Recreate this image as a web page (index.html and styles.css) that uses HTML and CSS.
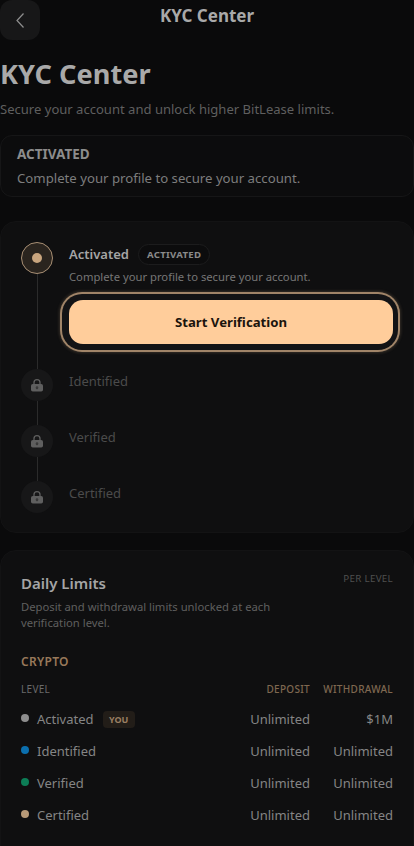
FILE: index.html
```html
<!DOCTYPE html>
<html lang="en">
<head>
<meta charset="utf-8">
<title>KYC Center</title>
<link rel="stylesheet" href="styles.css">
</head>
<body>
<header class="topbar">
  <button class="back" aria-label="Back">
    <svg width="12" height="18" viewBox="0 0 12 18" fill="none"><path d="M9.5 2.5 L3 9.5 L9.5 16.5" stroke="#8f8f8f" stroke-width="1.2"/></svg>
  </button>
  <div class="topbar-title">KYC Center</div>
</header>
<main>
  <h1 class="title">KYC Center</h1>
  <p class="subtitle">Secure your account and unlock higher BitLease limits.</p>
  <section class="status">
    <div class="status-name">ACTIVATED</div>
    <div class="status-text">Complete your profile to secure your account.</div>
  </section>
  <section class="card steps">
    <div class="step step-active">
      <div class="rail"><span class="node node-active"><span class="node-dot"></span></span><span class="line"></span></div>
      <div class="step-body">
        <div class="step-head"><span class="step-name">Activated</span><span class="pill">ACTIVATED</span></div>
        <div class="step-text">Complete your profile to secure your account.</div>
        <button class="cta">Start Verification</button>
      </div>
    </div>
    <div class="step">
      <div class="rail"><span class="node"><svg class="lock" width="14" height="14" viewBox="0 0 14 14"><path d="M4 6.5V4.6a3 3 0 0 1 6 0v1.9" fill="none" stroke="#5f5f5f" stroke-width="1.3"/><rect x="1" y="6" width="12" height="7.5" rx="1.8" fill="#5f5f5f"/><rect x="5.8" y="8.3" width="2.4" height="3" rx="1" fill="#3a3a3a"/></svg></span><span class="line"></span></div>
      <div class="step-locked">Identified</div>
    </div>
    <div class="step">
      <div class="rail"><span class="node"><svg class="lock" width="14" height="14" viewBox="0 0 14 14"><path d="M4 6.5V4.6a3 3 0 0 1 6 0v1.9" fill="none" stroke="#5f5f5f" stroke-width="1.3"/><rect x="1" y="6" width="12" height="7.5" rx="1.8" fill="#5f5f5f"/><rect x="5.8" y="8.3" width="2.4" height="3" rx="1" fill="#3a3a3a"/></svg></span><span class="line"></span></div>
      <div class="step-locked">Verified</div>
    </div>
    <div class="step step-last">
      <div class="rail"><span class="node"><svg class="lock" width="14" height="14" viewBox="0 0 14 14"><path d="M4 6.5V4.6a3 3 0 0 1 6 0v1.9" fill="none" stroke="#5f5f5f" stroke-width="1.3"/><rect x="1" y="6" width="12" height="7.5" rx="1.8" fill="#5f5f5f"/><rect x="5.8" y="8.3" width="2.4" height="3" rx="1" fill="#3a3a3a"/></svg></span></div>
      <div class="step-locked">Certified</div>
    </div>
  </section>
  <section class="card limits">
    <div class="limits-head">
      <div>
        <h2 class="limits-title">Daily Limits</h2>
        <p class="limits-text">Deposit and withdrawal limits unlocked at each verification level.</p>
      </div>
      <span class="per-level">PER LEVEL</span>
    </div>
    <div class="group">CRYPTO</div>
    <div class="row row-head">
      <span class="col-level">LEVEL</span><span class="col-dep accent">DEPOSIT</span><span class="col-wd accent">WITHDRAWAL</span>
    </div>
    <div class="row">
      <span class="col-level"><i class="dot dot-grey"></i>Activated<b class="you">YOU</b></span><span class="col-dep">Unlimited</span><span class="col-wd">$1M</span>
    </div>
    <div class="row">
      <span class="col-level"><i class="dot dot-blue"></i>Identified</span><span class="col-dep">Unlimited</span><span class="col-wd">Unlimited</span>
    </div>
    <div class="row">
      <span class="col-level"><i class="dot dot-green"></i>Verified</span><span class="col-dep">Unlimited</span><span class="col-wd">Unlimited</span>
    </div>
    <div class="row">
      <span class="col-level"><i class="dot dot-tan"></i>Certified</span><span class="col-dep">Unlimited</span><span class="col-wd">Unlimited</span>
    </div>
  </section>
</main>
</body>
</html>
```
FILE: styles.css
```css
* { box-sizing: border-box; }
html, body { margin: 0; padding: 0; }
body {
  width: 414px;
  height: 846px;
  overflow: hidden;
  background: #0a0a0b;
  color: #a8a8a8;
  font-family: "Noto Sans", "Open Sans", sans-serif;
}
.topbar {
  position: relative;
  height: 40px;
  display: flex;
  align-items: flex-start;
  justify-content: center;
}
.back {
  position: absolute;
  left: 0;
  top: 0;
  width: 40px;
  height: 40px;
  border: 0;
  padding: 0;
  border-radius: 12px;
  background: #171718;
  display: flex;
  align-items: center;
  justify-content: center;
}
.topbar-title {
  margin-top: 4px;
  font-size: 17px;
  line-height: 24px;
  font-weight: 700;
  color: #a9a9a9;
}
.title {
  margin: 16px 0 0 0;
  font-size: 27.2px;
  line-height: 36px;
  font-weight: 700;
  color: #a9a9a9;
}
.subtitle {
  margin: 7px 0 0;
  font-size: 13.05px;
  line-height: 20px;
  color: #5f5f5f;
}
.status {
  margin-top: 16px;
  height: 62px;
  padding: 8px 16px;
  border: 1px solid #161617;
  border-radius: 12px;
  background: #0c0c0d;
}
.status-name {
  font-size: 13.5px;
  line-height: 20px;
  font-weight: 700;
  color: #8c8c8c;
}
.status-text {
  margin-top: 4px;
  font-size: 13.2px;
  line-height: 20px;
  color: #7d7d7d;
}
.card {
  border: 1px solid #131314;
  border-radius: 16px;
  background: #0f0f10;
}
.steps {
  margin-top: 24px;
  height: 312px;
  padding: 20px 20px 0;
}
.step {
  display: flex;
  gap: 16px;
  min-height: 56px;
}
.step-active { height: 127px; }
.rail {
  width: 32px;
  flex: none;
  display: flex;
  flex-direction: column;
  align-items: center;
}
.node {
  flex: none;
  width: 32px;
  height: 32px;
  border-radius: 50%;
  background: #171718;
  display: flex;
  align-items: center;
  justify-content: center;
}
.node-active {
  background: #2a241e;
  border: 1px solid #a88f74;
}
.node-dot {
  width: 10px;
  height: 10px;
  border-radius: 50%;
  background: #c9a57e;
}
.line {
  flex: 1;
  width: 1px;
  background: #2b2b2b;
}
.step-body { flex: 1; padding-top: 1px; }
.step-head {
  display: flex;
  align-items: center;
  gap: 9px;
  height: 22px;
}
.step-name {
  font-size: 13px;
  font-weight: 600;
  color: #a5a5a5;
}
.pill {
  height: 21px;
  padding: 0 8px;
  border: 1px solid #1c1c1d;
  border-radius: 11px;
  background: #0c0c0d;
  font-size: 9.6px;
  line-height: 19px;
  font-weight: 700;
  letter-spacing: .3px;
  color: #8a8a8a;
}
.step-text {
  margin-top: 2px;
  font-size: 11.25px;
  line-height: 20px;
  color: #767676;
}
.cta {
  display: block;
  width: 324px;
  height: 44px;
  margin-top: 13px;
  border: 0;
  border-radius: 14px;
  background: #ffcd9b;
  color: #1b140d;
  font-family: inherit;
  font-size: 13.2px;
  font-weight: 700;
  box-shadow: -1px 0 0 6px #131315, -1px 0 0 8px #a08468, -1px 0 3px 9px rgba(168, 138, 107, .25);
}
.step-locked {
  padding-top: 2px;
  font-size: 13px;
  line-height: 20px;
  color: #4b4b4b;
}
.limits {
  margin-top: 17px;
  height: 330px;
  padding: 21px 20px 0;
}
.limits-head {
  display: flex;
  justify-content: space-between;
  align-items: flex-start;
}
.limits-title {
  margin: 0;
  font-size: 15px;
  line-height: 22px;
  font-weight: 600;
  color: #a5a5a5;
}
.limits-text {
  margin: 5px 0 0;
  width: 270px;
  font-size: 11.25px;
  line-height: 16px;
  color: #5f5f5f;
}
.per-level {
  margin-top: 1px;
  font-size: 9.8px;
  line-height: 12px;
  letter-spacing: .3px;
  color: #4f4f4f;
}
.group {
  margin-top: 23px;
  font-size: 12px;
  line-height: 16px;
  font-weight: 600;
  letter-spacing: .3px;
  color: #98795a;
}
.row {
  display: flex;
  align-items: center;
  height: 32px;
  font-size: 13px;
  color: #858585;
}
.row-head {
  height: 18px;
  margin: 10px 0 5px;
  font-size: 10px;
  letter-spacing: .3px;
  color: #6a6a6a;
}
.col-level {
  flex: 1;
  display: flex;
  align-items: center;
}
.col-dep { width: 70px; text-align: right; flex: none; }
.col-wd { width: 83px; text-align: right; flex: none; }
.accent { color: #7f6850; font-weight: 500; }
.dot {
  width: 8px;
  height: 8px;
  border-radius: 50%;
  margin: -3px 8px 0 0;
}
.dot-grey { background: #8e8e8e; }
.dot-blue { background: #0b6fae; }
.dot-green { background: #0c7d56; }
.dot-tan { background: #b89a78; }
.you {
  margin-left: 9px;
  height: 17px;
  padding: 0 6.5px;
  border-radius: 4px;
  background: #221d18;
  font-size: 9px;
  line-height: 17px;
  font-weight: 700;
  color: #9a7f62;
}
```
